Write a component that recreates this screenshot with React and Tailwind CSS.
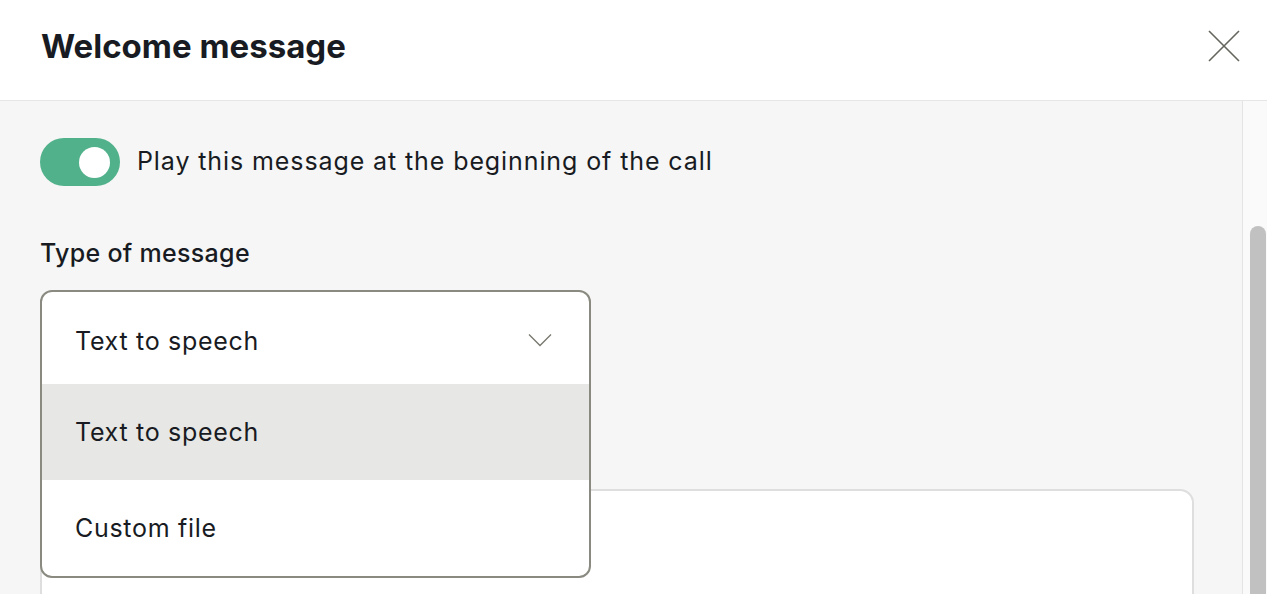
import { useState } from "react"

function App() {
  const [enabled, setEnabled] = useState(true)

  return (
    <div className="h-[594px] w-full overflow-hidden flex flex-col bg-white text-[#181b22] font-['Inter',sans-serif]">
      {/* Header */}
      <div className="h-[101px] shrink-0 flex items-center justify-between pl-[41px] pr-[26px] border-b border-[#e6e6e6]">
        <h1 className="text-[33px] font-bold tracking-[0px] pb-[7px]">Welcome message</h1>
        <button className="w-[34px] h-[34px] flex items-center justify-center text-[#65655d] mb-[9px]">
          <svg className="w-[34px] h-[34px]" viewBox="0 0 34 34" fill="none" stroke="currentColor" strokeWidth={1.6}>
            <path d="M2 2l30 30M32 2L2 32" />
          </svg>
        </button>
      </div>

      {/* Body */}
      <div className="flex-1 flex bg-[#f6f6f6]">
        <div className="flex-1 pl-[40px] pr-[48px] pt-[37px]">
          {/* Toggle */}
          <div className="flex items-center gap-[17px]">
            <button
              onClick={() => setEnabled(!enabled)}
              className="w-[80px] h-[48px] rounded-full bg-[#50b18b] flex items-center justify-end pr-[10px]"
            >
              <span className="w-[31px] h-[31px] rounded-full bg-white block" />
            </button>
            <span className="text-[25px] font-normal tracking-[0.9px]">Play this message at the beginning of the call</span>
          </div>

          {/* Type of message */}
          <div className="mt-[49px] text-[25px] font-medium leading-[36px] tracking-[0.3px]">Type of message</div>

          <div className="relative mt-[19px] w-[551px] h-[93px] z-10">
            <div className="absolute top-0 left-0 w-full rounded-[12px] border-2 border-[#8a8a81] bg-white overflow-hidden">
              <div className="h-[92px] flex items-center justify-between pl-[33px] pr-[37px] pt-[8px]">
                <span className="text-[25px] font-normal tracking-[0.7px]">Text to speech</span>
                <svg className="w-[24px] h-[14px] text-[#77776f] mb-[4px]" viewBox="0 0 24 14" fill="none" stroke="currentColor" strokeWidth={1.3}>
                  <path d="M1 1.5l11 11L23 1.5" />
                </svg>
              </div>
              <div className="h-[96px] flex items-center pl-[33px] pt-[2px] bg-[#e7e7e5] text-[25px] font-normal tracking-[0.7px]">Text to speech</div>
              <div className="h-[96px] flex items-center pl-[33px] pt-[2px] text-[25px] font-normal tracking-[0.7px]">Custom file</div>
            </div>
          </div>

          {/* Message field (mostly under the open menu) */}
          <div className="h-[106px]" />
          <div className="h-[200px] rounded-[14px] border-2 border-[#dedede] bg-white" />
        </div>

        {/* Scrollbar */}
        <div className="w-[25px] shrink-0 border-l border-[#e4e4e4] bg-[#fafafa] pt-[125px] pl-[7px]">
          <div className="w-[16px] h-[400px] rounded-full bg-[#c1c1c1]" />
        </div>
      </div>
    </div>
  )
}

export default App
